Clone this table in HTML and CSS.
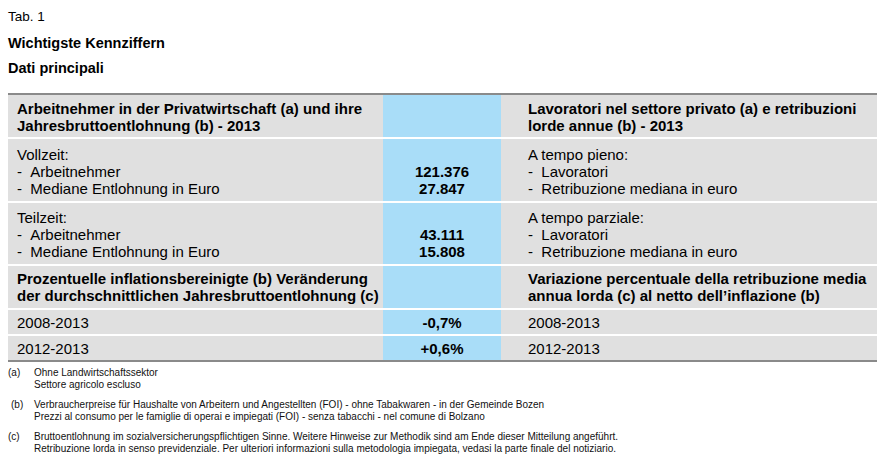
FILE: index.html
```html
<!DOCTYPE html>
<html lang="de">
<head>
<meta charset="utf-8">
<title>Tab. 1</title>
<link rel="stylesheet" href="styles.css">
</head>
<body>
<div class="page">
  <div class="tab-no">Tab. 1</div>
  <div class="title">Wichtigste Kennziffern</div>
  <div class="title title-it">Dati principali</div>

  <div class="grid">
    <div class="cell head left">Arbeitnehmer in der Privatwirtschaft (a) und ihre<br>Jahresbruttoentlohnung (b) - 2013</div>
    <div class="cell head num"></div>
    <div class="cell head right">Lavoratori nel settore privato (a) e retribuzioni<br>lorde annue (b) - 2013</div>

    <div class="cell group left">Vollzeit:<br>-&nbsp;&nbsp;Arbeitnehmer<br>-&nbsp;&nbsp;Mediane Entlohnung in Euro</div>
    <div class="cell group num"><br>121.376<br>27.847</div>
    <div class="cell group right">A tempo pieno:<br>-&nbsp;&nbsp;Lavoratori<br>-&nbsp;&nbsp;Retribuzione mediana in euro</div>

    <div class="cell group group2 left">Teilzeit:<br>-&nbsp;&nbsp;Arbeitnehmer<br>-&nbsp;&nbsp;Mediane Entlohnung in Euro</div>
    <div class="cell group group2 num"><br>43.111<br>15.808</div>
    <div class="cell group group2 right">A tempo parziale:<br>-&nbsp;&nbsp;Lavoratori<br>-&nbsp;&nbsp;Retribuzione mediana in euro</div>

    <div class="cell head head2 left">Prozentuelle inflationsbereinigte (b) Veränderung<br>der durchschnittlichen Jahresbruttoentlohnung (c)</div>
    <div class="cell head head2 num"></div>
    <div class="cell head head2 right">Variazione percentuale della retribuzione media<br>annua lorda (c) al netto dell’inflazione (b)</div>

    <div class="cell single left">2008-2013</div>
    <div class="cell single num">-0,7%</div>
    <div class="cell single right">2008-2013</div>

    <div class="cell single left">2012-2013</div>
    <div class="cell single num">+0,6%</div>
    <div class="cell single right">2012-2013</div>
  </div>

  <div class="notes">
    <div class="note">
      <span class="mark">(a)</span>
      <span class="note-text">Ohne Landwirtschaftssektor<br>Settore agricolo escluso</span>
    </div>
    <div class="note">
      <span class="mark mark-b">(b)</span>
      <span class="note-text">Verbraucherpreise für Haushalte von Arbeitern und Angestellten (FOI) - ohne Tabakwaren - in der Gemeinde Bozen<br>Prezzi al consumo per le famiglie di operai e impiegati (FOI) - senza tabacchi - nel comune di Bolzano</span>
    </div>
    <div class="note">
      <span class="mark">(c)</span>
      <span class="note-text">Bruttoentlohnung im sozialversicherungspflichtigen Sinne. Weitere Hinweise zur Methodik sind am Ende dieser Mitteilung angeführt.<br>Retribuzione lorda in senso previdenziale. Per ulteriori informazioni sulla metodologia impiegata, vedasi la parte finale del notiziario.</span>
    </div>
  </div>
</div>
</body>
</html>
```

FILE: styles.css
```css
html, body {
  margin: 0;
  padding: 0;
  background: #ffffff;
}

body {
  font-family: "Liberation Sans", Arial, sans-serif;
  color: #000000;
}

.page {
  padding: 9px 8px 0 8px;
  width: 869px;
}

.tab-no {
  font-size: 13.5px;
  line-height: 16px;
}

.title {
  font-size: 14.5px;
  font-weight: bold;
  line-height: 16px;
  margin-top: 10px;
}

.title-it {
  margin-top: 9px;
}

.grid {
  margin-top: 17px;
  display: grid;
  grid-template-columns: 375px 118px 376px;
  row-gap: 2px;
  background: #ffffff;
  border-top: 2px solid #8a8a8a;
  border-bottom: 2px solid #8a8a8a;
  font-size: 15px;
  line-height: 17px;
}

.cell {
  background: #e0e0e0;
}

.cell.num {
  background: #a9ddf8;
  font-weight: bold;
  text-align: center;
}

.cell.left {
  padding-left: 9px;
}

.cell.right {
  padding-left: 27px;
}

.head {
  font-weight: bold;
  padding-top: 5px;
  padding-bottom: 3px;
  height: 34px;
}

.head2 {
  padding-top: 4px;
  padding-bottom: 4px;
}

.group {
  padding-top: 7px;
  padding-bottom: 4px;
  height: 51px;
}

.group2 {
  padding-top: 6px;
  padding-bottom: 4px;
}

.single {
  padding-top: 4px;
  padding-bottom: 3px;
}

.notes {
  margin-top: 5px;
  font-size: 10px;
  line-height: 12px;
  color: #111111;
}

.note {
  display: flex;
  margin-bottom: 8px;
}

.mark {
  width: 26px;
  flex: none;
}

.mark-b {
  padding-left: 3px;
  width: 23px;
}
```
